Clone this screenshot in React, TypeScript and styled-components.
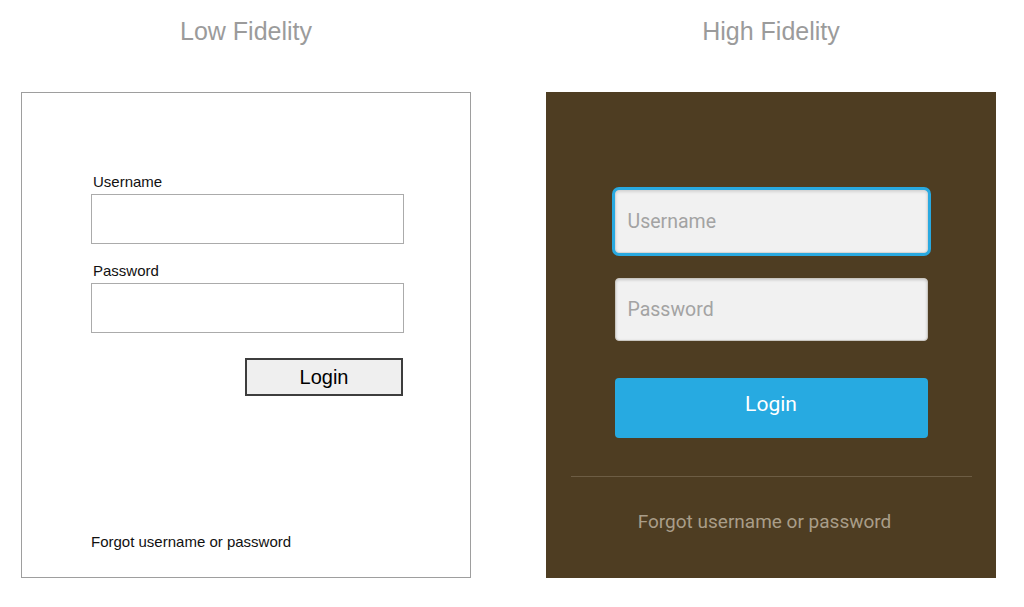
import React from "react";
import styled, { createGlobalStyle } from "styled-components";

const GlobalStyle = createGlobalStyle`
  html, body { margin: 0; padding: 0; background: #ffffff; }
  body {
    width: 1024px;
    height: 607px;
    overflow: hidden;
    font-family: "Liberation Sans", Arial, sans-serif;
  }
`;

const Page = styled.div`
  display: flex;
  gap: 75px;
  padding-left: 21px;
`;

const Column = styled.section`
  width: 450px;
  display: flex;
  flex-direction: column;
  align-items: center;
`;

const Title = styled.h2`
  margin: 0 0 47px;
  padding-top: 17px;
  font-family: "Liberation Sans", Arial, sans-serif;
  font-weight: 400;
  font-size: 25px;
  line-height: 28px;
  color: #9b9b9b;
`;

/* ---------- Low fidelity ---------- */

const WireBox = styled.div`
  box-sizing: border-box;
  width: 450px;
  height: 486px;
  border: 1px solid #9e9e9e;
  background: #fff;
  display: flex;
  flex-direction: column;
  padding: 81px 0 26px 69px;
`;

const WireForm = styled.div`
  width: 313px;
  display: flex;
  flex-direction: column;
`;

const WireLabel = styled.label<{ $gap?: number }>`
  font-size: 15px;
  line-height: 16px;
  color: #111;
  padding-left: 2px;
  margin-top: ${(p) => p.$gap ?? 0}px;
  margin-bottom: 4px;
`;

const WireInput = styled.input`
  box-sizing: border-box;
  width: 313px;
  height: 50px;
  border: 1px solid #ababab;
  background: #fff;
  outline: none;
  padding: 0 8px;
  font-family: inherit;
  font-size: 14px;
`;

const WireButton = styled.button`
  box-sizing: border-box;
  align-self: flex-end;
  margin: 25px 1px 0 0;
  width: 158px;
  height: 38px;
  border: 2px solid #3d3d3d;
  background: #efefef;
  font-family: "Liberation Sans", Arial, sans-serif;
  font-size: 20px;
  color: #000;
  padding: 0;
`;

const WireForgot = styled.div`
  margin-top: auto;
  font-size: 15px;
  line-height: 18px;
  color: #111;
`;

/* ---------- High fidelity ---------- */

const LoginCard = styled.div`
  box-sizing: border-box;
  width: 450px;
  height: 486px;
  background: #4e3d22;
  display: flex;
  flex-direction: column;
  align-items: center;
  padding-top: 98px;
  font-family: Roboto, "Noto Sans", sans-serif;
`;

const Field = styled.input<{ $focused?: boolean; $gap?: number }>`
  box-sizing: border-box;
  width: 313px;
  height: 63px;
  margin-top: ${(p) => p.$gap ?? 0}px;
  border-radius: 4px;
  border: 1px solid ${(p) => (p.$focused ? "#d6d6d6" : "#c9c6c0")};
  background: #f1f1f1;
  padding: 0 12px;
  outline: none;
  font-family: Roboto, "Noto Sans", sans-serif;
  font-size: 19.5px;
  color: #555;
  box-shadow: ${(p) =>
    p.$focused
      ? "0 0 0 3px #29a9e0, inset 0 1px 3px rgba(0,0,0,0.12)"
      : "inset 0 1px 3px rgba(0,0,0,0.18)"};
  &::placeholder {
    color: #a3a3a3;
  }
`;

const PrimaryButton = styled.button`
  box-sizing: border-box;
  width: 313px;
  height: 60px;
  margin-top: 37px;
  border: none;
  border-radius: 4px;
  background: #27aae1;
  color: #ffffff;
  font-family: Roboto, "Noto Sans", sans-serif;
  font-size: 21px;
  padding: 0 0 9px;
`;

const Divider = styled.hr`
  width: 401px;
  height: 1px;
  margin: 38px 0 0;
  border: none;
  background: #6d5d44;
`;

const ForgotLink = styled.div`
  margin-top: 34px;
  padding-right: 13px;
  font-size: 19px;
  line-height: 22px;
  color: #a99d89;
`;

export default function App() {
  return (
    <>
      <GlobalStyle />
      <Page>
        <Column>
          <Title>Low Fidelity</Title>
          <WireBox>
            <WireForm>
              <WireLabel>Username</WireLabel>
              <WireInput readOnly />
              <WireLabel $gap={19}>Password</WireLabel>
              <WireInput readOnly type="password" />
              <WireButton>Login</WireButton>
            </WireForm>
            <WireForgot>Forgot username or password</WireForgot>
          </WireBox>
        </Column>
        <Column>
          <Title>High Fidelity</Title>
          <LoginCard>
            <Field $focused placeholder="Username" readOnly />
            <Field $gap={25} placeholder="Password" readOnly />
            <PrimaryButton>Login</PrimaryButton>
            <Divider />
            <ForgotLink>Forgot username or password</ForgotLink>
          </LoginCard>
        </Column>
      </Page>
    </>
  );
}
